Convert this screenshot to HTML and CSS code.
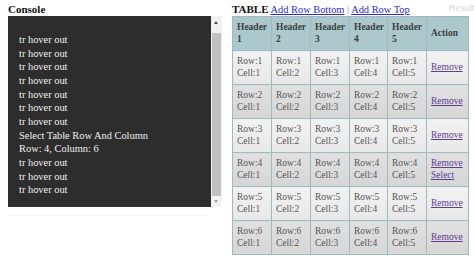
FILE: index.html
```html
<!DOCTYPE html>
<html>
<head>
<meta charset="utf-8">
<link rel="stylesheet" href="styles.css">
</head>
<body>
<div class="result-label">Result</div>
<div class="page">
  <section class="console-col">
    <h3 class="label">Console</h3>
    <div class="console">
      <div class="console-text">
        <div>tr hover out</div>
        <div>tr hover out</div>
        <div>tr hover out</div>
        <div>tr hover out</div>
        <div>tr hover out</div>
        <div>tr hover out</div>
        <div>tr hover out</div>
        <div>Select Table Row And Column</div>
        <div>Row: 4, Column: 6</div>
        <div>tr hover out</div>
        <div>tr hover out</div>
        <div>tr hover out</div>
      </div>
      <div class="scrollbar">
        <div class="arrow up"></div>
        <div class="track"><div class="thumb"></div></div>
        <div class="arrow down"></div>
      </div>
    </div>
    <div class="console-foot"></div>
  </section>
  <section class="table-col">
    <div class="table-head"><span class="label">TABLE</span> <a href="#" class="link">Add Row Bottom</a> <span class="sep">|</span> <a href="#" class="link">Add Row Top</a></div>
    <table class="grid">
      <colgroup>
        <col class="c1"><col class="c2"><col class="c3"><col class="c4"><col class="c5"><col class="c6">
      </colgroup>
      <thead>
        <tr><th>Header<br>1</th><th>Header<br>2</th><th>Header<br>3</th><th>Header<br>4</th><th>Header<br>5</th><th>Action</th></tr>
      </thead>
      <tbody>
        <tr class="odd"><td>Row:1<br>Cell:1</td><td>Row:1<br>Cell:2</td><td>Row:1<br>Cell:3</td><td>Row:1<br>Cell:4</td><td>Row:1<br>Cell:5</td><td><a href="#" class="rm">Remove</a></td></tr>
        <tr class="even"><td>Row:2<br>Cell:1</td><td>Row:2<br>Cell:2</td><td>Row:2<br>Cell:3</td><td>Row:2<br>Cell:4</td><td>Row:2<br>Cell:5</td><td><a href="#" class="rm">Remove</a></td></tr>
        <tr class="odd"><td>Row:3<br>Cell:1</td><td>Row:3<br>Cell:2</td><td>Row:3<br>Cell:3</td><td>Row:3<br>Cell:4</td><td>Row:3<br>Cell:5</td><td><a href="#" class="rm">Remove</a></td></tr>
        <tr class="even"><td>Row:4<br>Cell:1</td><td>Row:4<br>Cell:2</td><td>Row:4<br>Cell:3</td><td>Row:4<br>Cell:4</td><td>Row:4<br>Cell:5</td><td><a href="#" class="rm">Remove</a><br><a href="#" class="rm">Select</a></td></tr>
        <tr class="odd"><td>Row:5<br>Cell:1</td><td>Row:5<br>Cell:2</td><td>Row:5<br>Cell:3</td><td>Row:5<br>Cell:4</td><td>Row:5<br>Cell:5</td><td><a href="#" class="rm">Remove</a></td></tr>
        <tr class="even"><td>Row:6<br>Cell:1</td><td>Row:6<br>Cell:2</td><td>Row:6<br>Cell:3</td><td>Row:6<br>Cell:4</td><td>Row:6<br>Cell:5</td><td><a href="#" class="rm">Remove</a></td></tr>
      </tbody>
    </table>
  </section>
</div>
</body>
</html>
```
FILE: styles.css
```css
html, body {
  margin: 0;
  padding: 0;
  background: #ffffff;
}
body {
  font-family: "Liberation Serif", "Times New Roman", serif;
  position: relative;
  width: 474px;
  height: 258px;
  overflow: hidden;
}
.result-label {
  position: absolute;
  top: 3px;
  left: 449px;
  font-family: "Liberation Sans", Arial, sans-serif;
  font-size: 9px;
  color: #d6d6d6;
}
.page {
  display: flex;
  gap: 10px;
  padding: 3px 0 0 8px;
}
.label {
  margin: 0;
  font-size: 11px;
  font-weight: bold;
  line-height: 13px;
  color: #111;
}
.console-col {
  width: 214px;
}
.console {
  display: flex;
  height: 191px;
  background: #2d2d2d;
}
.console-text {
  flex: 1;
  padding: 17px 0 0 11px;
  font-size: 10.4px;
  line-height: 13.67px;
  color: #f0f0f0;
  overflow: hidden;
}
.scrollbar {
  width: 11px;
  background: #f1f1f1;
  display: flex;
  flex-direction: column;
  align-items: center;
}
.arrow {
  height: 12px;
  width: 11px;
  position: relative;
}
.arrow.up::after, .arrow.down::after {
  content: "";
  position: absolute;
  left: 3px;
  border-left: 2.5px solid transparent;
  border-right: 2.5px solid transparent;
}
.arrow.up::after {
  top: 5px;
  border-bottom: 3px solid #505050;
}
.arrow.down::after {
  top: 4px;
  border-top: 3px solid #a0a0a0;
}
.track {
  flex: 1;
  width: 11px;
  padding: 5px 1px 0 1px;
  box-sizing: border-box;
}
.thumb {
  height: 163px;
  background: #c1c1c1;
}
.console-foot {
  margin-top: 8px;
  height: 1px;
  width: 200px;
  background: #f6f6f6;
}
.table-col {
  display: flex;
  flex-direction: column;
}
.table-head {
  height: 13px;
  line-height: 13px;
  font-size: 10.4px;
  white-space: nowrap;
}
.link {
  color: #2a2ad6;
  text-decoration: underline;
}
.sep {
  color: #888;
}
.grid {
  border-collapse: collapse;
  table-layout: fixed;
  width: 236px;
  font-size: 9.5px;
  line-height: 11.5px;
  color: #555;
}
.c1, .c2, .c3, .c5 { width: 39px; }
.c4 { width: 38px; }
.c6 { width: 42px; }
.grid th, .grid td {
  border: 1px solid #9ebcc0;
  padding: 5px 4px;
  text-align: left;
  vertical-align: middle;
}
.grid th {
  background: #abc8cc;
  color: #3d3d3d;
  font-weight: bold;
}
.grid tr.odd td {
  background: linear-gradient(#f2f2f2, #e8e8e8);
}
.grid tr.even td {
  background: linear-gradient(#e0e0e0, #d6d6d6);
}
.rm {
  color: #5d4096;
  text-decoration: underline;
}
```
